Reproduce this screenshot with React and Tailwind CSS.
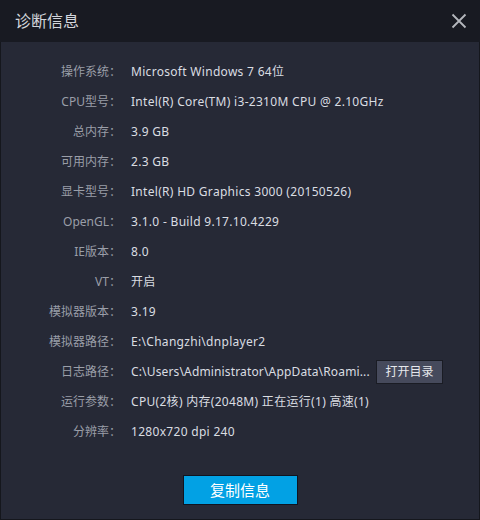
const rows = [
  ["操作系统", "Microsoft Windows 7 64位"],
  ["CPU型号", "Intel(R) Core(TM) i3-2310M CPU @ 2.10GHz"],
  ["总内存", "3.9 GB"],
  ["可用内存", "2.3 GB"],
  ["显卡型号", "Intel(R) HD Graphics 3000 (20150526)"],
  ["OpenGL", "3.1.0 - Build 9.17.10.4229"],
  ["IE版本", "8.0"],
  ["VT", "开启"],
  ["模拟器版本", "3.19"],
  ["模拟器路径", "E:\\Changzhi\\dnplayer2"],
  ["日志路径", "C:\\Users\\Administrator\\AppData\\Roami...", true],
  ["运行参数", "CPU(2核) 内存(2048M) 正在运行(1) 高速(1)"],
  ["分辨率", "1280x720 dpi 240"],
];

export default function App() {
  return (
    <div
      className="w-[480px] h-[520px] flex flex-col bg-[#262936] text-[12px]"
      style={{ fontFamily: '"Noto Sans", "Noto Sans CJK SC", sans-serif' }}
    >
      {/* 标题栏 */}
      <div className="h-[42px] shrink-0 bg-[#181a22] flex items-center justify-between pl-[15px] pr-[13px]">
        <span className="text-[16px] text-[#d3d6dc]">诊断信息</span>
        <svg width="16" height="16" viewBox="0 0 16 16" className="text-[#b4b7bd]">
          <path d="M1.5 1.5 L14.5 14.5 M14.5 1.5 L1.5 14.5" stroke="currentColor" strokeWidth="1.8" fill="none" />
        </svg>
      </div>

      {/* 内容 */}
      <div className="flex-1 flex flex-col border-x border-b border-[#15171d] pt-[15px]">
        {rows.map(([label, value, hasBtn]) => (
          <div key={label} className="h-[30px] flex items-center">
            <div className="w-[120px] shrink-0 text-right text-[#9a9ea8] whitespace-nowrap">{label}：</div>
            <div className="ml-[10px] flex items-center">
              <span
                className={`text-[#dadde2] whitespace-nowrap ${
                  hasBtn ? "w-[240px] tracking-[0.15px]" : "tracking-[0.3px]"
                }`}
              >
                {value}
              </span>
              {hasBtn && (
                <button className="ml-[5px] w-[67px] h-[24px] bg-[#464a5c] border border-[#1a1c24] text-[#e6e8ec] text-[12px]">
                  打开目录
                </button>
              )}
            </div>
          </div>
        ))}

        <div className="flex-1 flex justify-center items-start pt-[28px]">
          <button className="w-[115px] h-[30px] bg-[#02a1e4] border border-[#101420] text-white text-[15px]">
            复制信息
          </button>
        </div>
      </div>
    </div>
  );
}
